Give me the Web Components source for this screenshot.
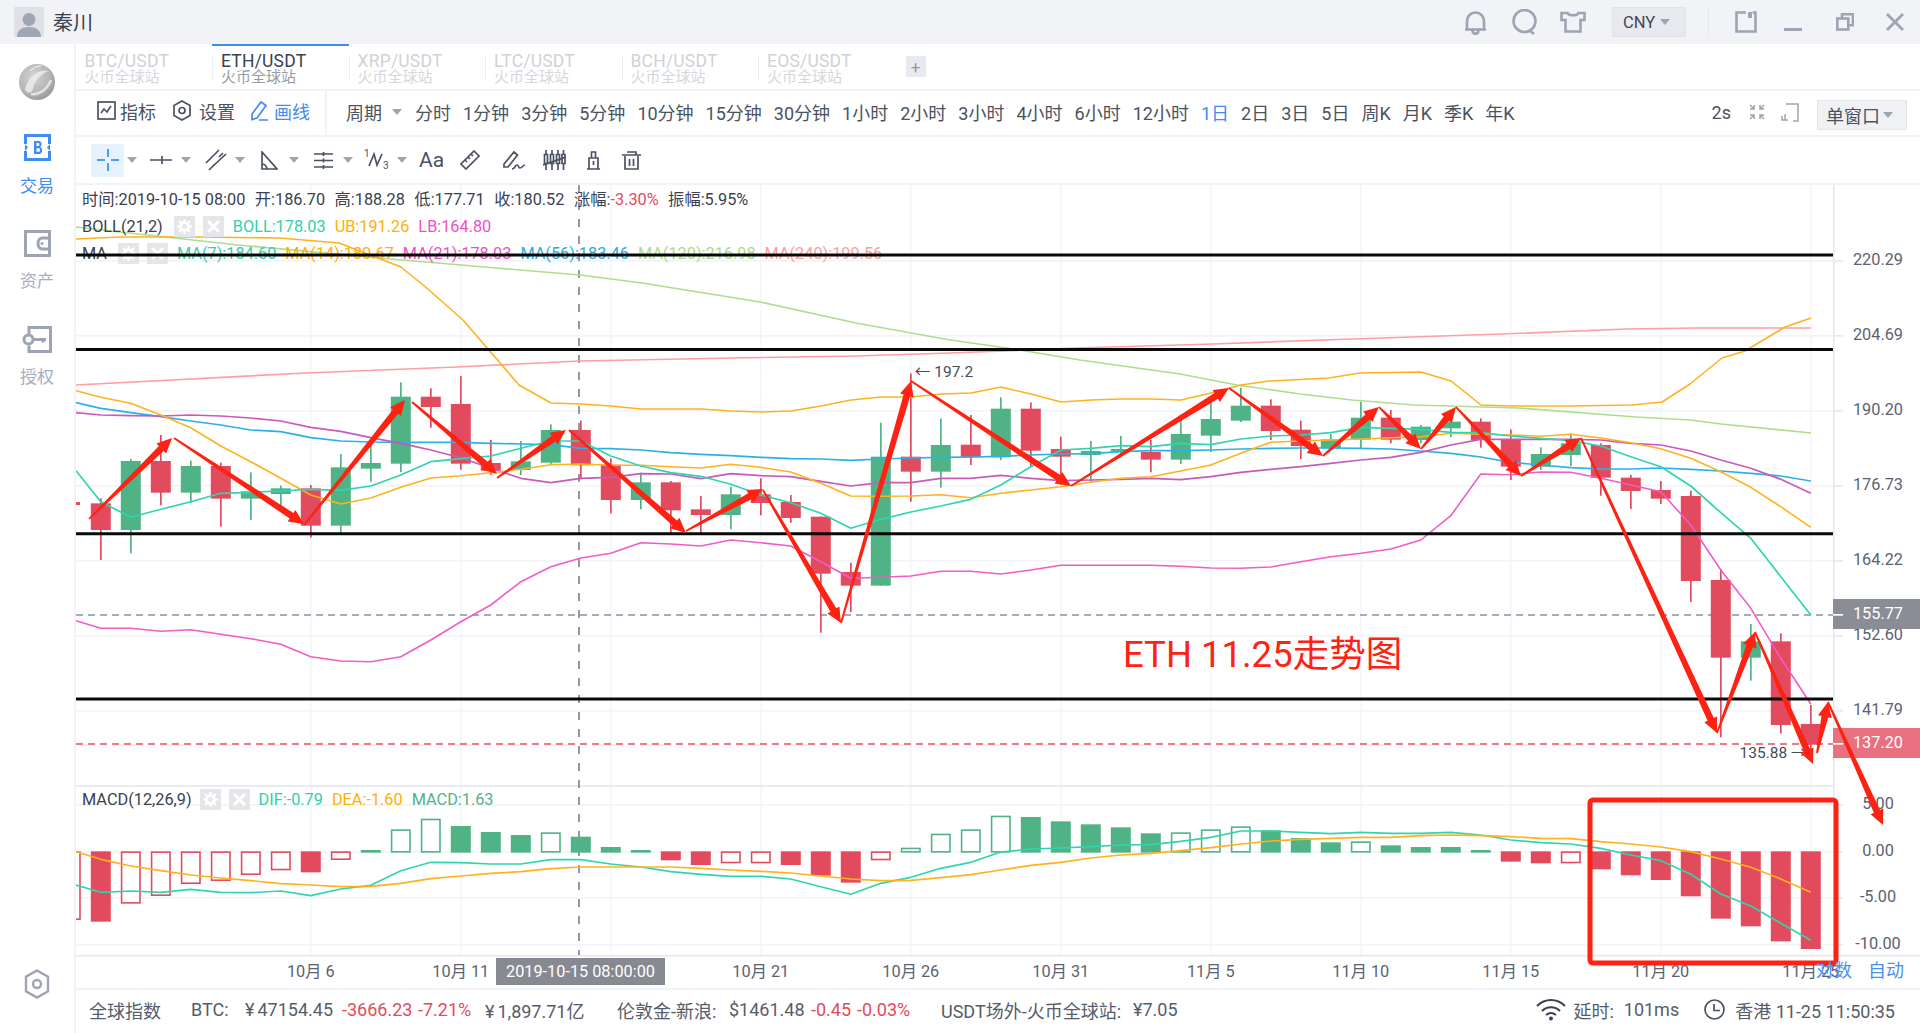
<!DOCTYPE html>
<html lang="zh">
<head>
<meta charset="utf-8">
<title>ETH/USDT</title>
<style>
html, body { margin: 0; height: 100%; background: #fff; overflow: hidden; }
body { font-family: Roboto, "Noto Sans CJK SC", sans-serif; color: #3f4654; }
</style>
</head>
<body>
<app-shell>
    <title-bar slot="top"></title-bar>
    <side-nav slot="side"></side-nav>
    <pair-tabs></pair-tabs>
    <period-bar></period-bar>
    <draw-bar></draw-bar>
    <kline-chart></kline-chart>
    <status-bar></status-bar>
</app-shell>

<script>
const html = String.raw;

const GREY = '#9ea4b1';
const INK = '#4b5261';
const BLUE = '#3f8cf2';
const RED = '#e24b5d';
const GREEN = '#4fb386';

class Base extends HTMLElement {
    constructor() {
        super();
        this.attachShadow({ mode: 'open' });
    }
}

class AppShell extends Base {
    connectedCallback() {
        this.shadowRoot.innerHTML = html`
            <style>
                :host { display: grid; grid-template: 44px 1fr / 74px 1fr; width: 1920px; height: 1033px; }
                .top { grid-column: 1 / 3; display: block; }
                .side { display: block; }
                main { display: flex; flex-direction: column; min-width: 0; border-left: 2px solid #f2f3f8; }
            </style>
            <slot class="top" name="top"></slot>
            <slot class="side" name="side"></slot>
            <main><slot></slot></main>
        `;
    }
}

class TitleBar extends Base {
    connectedCallback() {
        const s = `stroke="${GREY}" stroke-width="2.6" fill="none"`;
        this.shadowRoot.innerHTML = html`
            <style>
                :host { display: flex; align-items: center; height: 44px; background: #f1f3f7; }
                .avatar { width: 30px; height: 30px; margin-left: 14px; background: #dfe1e6; overflow: hidden; }
                .name { margin-left: 9px; padding-bottom: 2px; font-size: 20px; color: #3a4150; }
                .right { display: flex; align-items: center; margin-left: auto; }
                svg { display: block; }
                .cny { display: flex; align-items: center; gap: 5px; width: 74px; height: 30px; box-sizing: border-box; padding-left: 10px;
                       background: #e7e9ee; border: 1px solid #e1e3e8; font-size: 16.5px; color: #3f4654; }
                .caret { width: 0; height: 0; border: 5px solid transparent; border-top: 6px solid ${GREY}; border-bottom: 0; }
                .sep { width: 1px; height: 24px; background: #e3e5ea; }
            </style>
            <div class="avatar">
                <svg width="30" height="30" viewBox="0 0 30 30"><circle cx="15" cy="12.5" r="6.5" fill="#a0a6b3"/><path d="M3 30c0-7 5-10 12-10s12 3 12 10z" fill="#a0a6b3"/></svg>
            </div>
            <span class="name">秦川</span>
            <div class="right">
                <svg width="25" height="25" viewBox="0 0 25 25" ${s}><path d="M4 19V11a8.500 8.500 0 0 1 17 0v8"/><path d="M2 19.500h21"/><path d="M9.500 20c0 5 6 5 6 0"/></svg>
                <svg style="margin-left:23px" width="28" height="26" viewBox="0 0 28 26" ${s}><circle cx="13.500" cy="12" r="11"/><path d="M18 21l5 4"/></svg>
                <svg style="margin-left:21px" width="26" height="22" viewBox="0 0 26 22" ${s}><path d="M1.500 2h6c1 3 10 3 11 0h6v7h-4v11.500h-15V9h-4z"/></svg>
                <div class="cny" style="margin-left:26px">CNY<i class="caret"></i></div>
                <i class="sep" style="margin-left:22px"></i>
                <svg style="margin-left:26px" width="22" height="22" viewBox="0 0 22 22" ${s}><path d="M11 1.500H1.500v19h19V1.500h-3"/><rect x="13" y="1" width="4" height="6" fill="${GREY}" stroke="none"/></svg>
                <svg style="margin-left:27px" width="18" height="22" viewBox="0 0 18 22"><rect y="17" width="18" height="3" fill="${GREY}"/></svg>
                <svg style="margin-left:34px" width="18" height="18" viewBox="0 0 18 18" ${s}><rect x="1.300" y="5.500" width="11" height="11"/><path d="M6 5V1.300h11v11h-4"/></svg>
                <svg style="margin-left:32px;margin-right:16px" width="18" height="18" viewBox="0 0 18 18" stroke="${GREY}" stroke-width="2.8"><path d="M1 1l16 16M17 1L1 17"/></svg>
            </div>
        `;
    }
}

class SideNav extends Base {
    connectedCallback() {
        this.shadowRoot.innerHTML = html`
            <style>
                :host { display: flex; flex-direction: column; align-items: center; height: 989px; position: relative; }
                svg { display: block; }
                span { font-size: 17px; line-height: 22px; color: #a8aeba; }
                .on { color: ${BLUE}; }
                .hex { margin-top: auto; margin-bottom: 34px; }
            </style>
            <svg style="margin-top:19px" width="38" height="38" viewBox="0 0 38 38">
                <defs><radialGradient id="g" cx=".4" cy=".35" r=".75"><stop offset="0" stop-color="#d4d4d4"/><stop offset=".65" stop-color="#b2b2b2"/><stop offset="1" stop-color="#8e8e8e"/></radialGradient></defs>
                <circle cx="19" cy="19" r="18" fill="url(#g)"/>
                <path d="M7 27C9 15 20 5 31 8 24 10 16 17 15 26 14 30 10 31 7 27z" fill="#ececec" fill-opacity=".85"/>
                <path d="M13 31c8 1 16-4 20-14" stroke="#e2e2e2" stroke-width="2.500" fill="none"/>
                <path d="M12 8c4-4 8-5 11-5" stroke="#fff" stroke-width="1" fill="none"/>
            </svg>
            <svg style="margin-top:33px" width="27" height="27" viewBox="0 0 27 27">
                <path d="M1.500 10V1.500h24V10M1.500 17v8.500h24V17" stroke="${BLUE}" stroke-width="3" fill="none"/>
                <path d="M1 10l3 3.500-3 3.500M26 10l-3 3.500 3 3.500" fill="${BLUE}"/>
                <path d="M10 7h5c3 0 3.500 5.500 1 6 3 .5 3 7-1 7h-5z M12.500 9v3h2c1.200 0 1.200-3 0-3z M12.500 14.200v3.600h2.500c1.400 0 1.400-3.600 0-3.600z" fill="${BLUE}" fill-rule="evenodd"/>
            </svg>
            <span class="on" style="margin-top:14px">交易</span>
            <svg style="margin-top:33px" width="27" height="27" viewBox="0 0 27 27" fill="none" stroke="${GREY}" stroke-width="3">
                <path d="M25.500 1.500h-24v24h24z"/><path d="M25.500 8h-7c-6 0-6 11 0 11h7"/><circle cx="18" cy="13.500" r="1.500" fill="${GREY}" stroke="none"/>
            </svg>
            <span style="margin-top:13px">资产</span>
            <svg style="margin-top:34px" width="30" height="27" viewBox="0 0 30 27" fill="none" stroke="${GREY}" stroke-width="3">
                <path d="M7 8V1.500h21.500v24H7v-6"/><circle cx="6.500" cy="13.500" r="4.500"/><path d="M11 13.500h13M21 13.500v3"/>
            </svg>
            <span style="margin-top:13px">授权</span>
            <svg class="hex" width="26" height="30" viewBox="0 0 26 30" fill="none" stroke="${GREY}" stroke-width="2.400">
                <path d="M13 1.500l11 6.300v14.400l-11 6.300-11-6.300V7.800z"/><circle cx="13" cy="15" r="4"/>
            </svg>
        `;
    }
}

class PairTabs extends Base {
    connectedCallback() {
        const pairs = ['BTC', 'ETH', 'XRP', 'LTC', 'BCH', 'EOS'];
        const tabs = pairs.map(p => html`<div class="tab ${p === 'ETH' ? 'on' : ''}"><b>${p}/USDT</b><small>火币全球站</small></div>`).join('');
        this.shadowRoot.innerHTML = html`
            <style>
                :host { display: flex; align-items: flex-start; height: 45px; border-bottom: 2px solid #f2f3f8; flex: none; margin-left: -.5px; }
                .tab { width: 136.5px; height: 45px; box-sizing: border-box; padding: 9px 0 0 9px; position: relative; color: #cfd2d7; }
                .tab + .tab::before { content: ''; position: absolute; left: 0; top: 12px; height: 24px; width: 1px; background: #eceef2; }
                .on { box-shadow: inset 0 2px 0 ${BLUE}; color: #3a4150; }
                .tab.on + .tab::before, .tab.on::before { background: #eceef2; }
                b { display: block; font-weight: 400; font-size: 17.5px; letter-spacing: .2px; line-height: 17px; white-space: nowrap; }
                small { display: block; font-size: 15px; line-height: 15px; color: #d5d7db; white-space: nowrap; }
                .on small { color: #969ba5; }
                .plus { display: flex; align-items: center; justify-content: center; width: 20px; height: 21px; margin: 12px 0 0 11px; background: #e7eaee; color: #949aa6; font-size: 17px; }
            </style>
            ${tabs}<div class="plus">+</div>
        `;
    }
}

class PeriodBar extends Base {
    connectedCallback() {
        const periods = ['分时', '1分钟', '3分钟', '5分钟', '10分钟', '15分钟', '30分钟', '1小时', '2小时', '3小时', '4小时', '6小时', '12小时', '1日', '2日', '3日', '5日', '周K', '月K', '季K', '年K'];
        const s = `fill="none" stroke="${INK}" stroke-width="1.700"`;
        this.shadowRoot.innerHTML = html`
            <style>
                :host { display: flex; align-items: center; height: 44px; box-sizing: border-box; padding-bottom: 2px; border-bottom: 2px solid #f2f3f8; height: 46px; font-size: 18px; color: ${INK}; flex: none; white-space: nowrap; }
                svg { display: block; flex: none; }
                .tools { display: flex; align-items: center; height: 46px; margin-top: -2px; margin-bottom: -2px; width: 251px; box-sizing: border-box; padding: 0 0 3px 21px; border-right: 2px solid #f2f3f8; }
                .blue { color: ${BLUE}; }
                .list { display: flex; align-items: center; gap: 12px; margin-left: 19px; }
                .caret { width: 0; height: 0; border: 5px solid transparent; border-top: 6px solid ${GREY}; border-bottom: 0; margin: 0 1px 0 -2px; }
                .right { display: flex; align-items: center; margin-left: auto; }
                .btn { display: flex; align-items: center; gap: 5px; width: 90px; height: 30px; box-sizing: border-box; padding-left: 8px; margin: 6px 13px 0 18px; background: #eff1f4; border: 1px solid #e3e5e9; }
            </style>
            <div class="tools">
                <svg width="19" height="19" viewBox="0 0 19 19" ${s}><rect x="1" y="1" width="17" height="17"/><path d="M4 12l3-4 3 3 4-6"/></svg>
                <span style="margin-left:4px">指标</span>
                <svg style="margin-left:17px" width="18" height="21" viewBox="0 0 18 21" ${s}><path d="M9 1l8 4.500v10L9 20l-8-4.500v-10z"/><circle cx="9" cy="10.500" r="3"/></svg>
                <span style="margin-left:8px">设置</span>
                <svg style="margin-left:15px" width="19" height="21" viewBox="0 0 19 21" fill="none" stroke="${BLUE}" stroke-width="1.700"><path d="M2 14L11 2l5 3.500L7 18l-5 1.500zM9 20h9"/></svg>
                <span class="blue" style="margin-left:5px">画线</span>
            </div>
            <div class="list">
                <span>周期</span><i class="caret"></i>
                ${periods.map(p => html`<span class="${p === '1日' ? 'blue' : ''}">${p}</span>`).join('')}
            </div>
            <div class="right">
                <span>2s</span>
                <svg style="margin-left:17px" width="18" height="18" viewBox="0 0 18 18" fill="none" stroke="${GREY}" stroke-width="1.500"><path d="M2 2l4 4M6 2v4H2M16 2l-4 4M12 2v4h4M2 16l4-4M6 16v-4H2M16 16l-4-4M12 16v-4h4"/></svg>
                <svg style="margin-left:15px" width="18" height="19" viewBox="0 0 18 19" fill="none" stroke="${GREY}" stroke-width="1.500"><path d="M5 1h12v17h-5M1 13v4h6M4 11v6"/></svg>
                <div class="btn">单窗口<i class="caret"></i></div>
            </div>
        `;
    }
}

class DrawBar extends Base {
    connectedCallback() {
        const s = `fill="none" stroke="${INK}" stroke-width="1.700"`;
        const caret = ml => html`<i class="caret" style="margin-left:${ml}px"></i>`;
        this.shadowRoot.innerHTML = html`
            <style>
                :host { display: flex; align-items: center; height: 46px; border-bottom: 2px solid #f2f3f8; flex: none; }
                svg { display: block; flex: none; }
                .on { display: flex; align-items: center; justify-content: center; width: 33px; height: 33px; margin-left: 15px; background: #e6f3fd; }
                .caret { flex: none; width: 0; height: 0; border: 5px solid transparent; border-top: 6px solid ${GREY}; border-bottom: 0; }
                .aa { width: 26px; font-size: 21px; color: ${INK}; margin-left: 12px; line-height: 1; }
                text { font: 10px Roboto, sans-serif; fill: ${INK}; }
            </style>
            <div class="on"><svg width="22" height="22" viewBox="0 0 22 22" stroke="#4e9bf5" stroke-width="2"><path d="M11 0v8M11 14v8M0 11h8M14 11h8"/></svg></div>
            ${caret(3)}
            <svg style="margin-left:13px" width="22" height="14" viewBox="0 0 22 14" ${s}><path d="M0 7h22M12 3v8"/></svg>
            ${caret(9)}
            <svg style="margin-left:14px" width="22" height="22" viewBox="0 0 22 22" ${s}><path d="M1 14L14 1M6 19L21 5M4 21l6-6M14 8l4-4"/></svg>
            ${caret(8)}
            <svg style="margin-left:15px" width="18" height="19" viewBox="0 0 18 19" ${s}><path d="M2 1v17h15zM2 13c3 0 4.500 2 5 5"/></svg>
            ${caret(11)}
            <svg style="margin-left:15px" width="19" height="17" viewBox="0 0 19 17" ${s}><path d="M0 2h19M0 8.500h19M0 15h19M9.500 0v4M9.500 6.500v4M9.500 13v4"/></svg>
            ${caret(10)}
            <svg style="margin-left:11px" width="25" height="22" viewBox="0 0 25 22" ${s}><path d="M5 17L10 5l3 11 5-11"/><text x="0" y="8" stroke="none">1</text><text x="19" y="20" stroke="none">3</text></svg>
            ${caret(8)}
            <span class="aa">Aa</span>
            <svg style="margin-left:15px" width="20" height="20" viewBox="0 0 20 20" ${s}><path d="M14 1l5 5L6 19l-5-5zM11 4l2 2M8 7l2 2M5 10l2 2"/></svg>
            <svg style="margin-left:22px" width="24" height="20" viewBox="0 0 24 20" ${s}><path d="M2 14L12 2l3.500 3L6 17H2zM10 19c3 0 3-4 5-4s1 3 3 3 3-3 5-3"/></svg>
            <svg style="margin-left:17px" width="23" height="20" viewBox="0 0 23 20" fill="none" stroke="${INK}" stroke-width="1.700"><path d="M3 0v20M9 0v20M15 0v20M20.500 0v20"/><path d="M1.500 4.500h3v9h-3zM7.500 4.500h3v9h-3zM13.500 4.500h3v9h-3zM19 4.500h3v9h-3z" fill="#fff"/><path d="M0 15L23 7"/></svg>
            <svg style="margin-left:20px" width="15" height="19" viewBox="0 0 15 19" ${s}><path d="M3 7h9v11H3zM5.500 7V1h4v6M7.500 10v4M1 18h13"/></svg>
            <svg style="margin-left:21px" width="19" height="19" viewBox="0 0 19 19" ${s}><path d="M3 5v13h13V5M0 4h19M5 1h9v3M7.500 8v7M11.500 8v7"/></svg>
        `;
    }
}

const kx = i => 100.8 + 30 * i;
const yA = z => 360 + z / 3;
const yB = z => 400 + z / 3;
const yM = z => 780 + z / 3;

// [up, bodyTop, bodyBottom, wickTop, wickBottom]
const CANDLES_A = [
    [0, 430, 510, 415, 600], [1, 303, 510, 297, 580], [0, 303, 398, 225, 436], [1, 318, 398, 302, 428],
    [0, 318, 416, 308, 500], [1, 394, 416, 337, 480], [1, 385, 402, 377, 440], [0, 385, 497, 375, 533],
    [1, 322, 497, 282, 520], [1, 309, 326, 250, 365], [1, 110, 311, 67, 336], [0, 110, 141, 85, 203],
    [0, 132, 311, 48, 329], [0, 309, 332, 240, 345], [1, 304, 330, 243, 345], [1, 210, 308, 193, 313],
    [0, 210, 316, 182, 355], [0, 314, 420, 295, 460], [1, 367, 420, 338, 448], [0, 367, 451, 363, 520],
    [0, 448, 465, 408, 520], [1, 403, 465, 380, 508], [0, 403, 429, 355, 466], [0, 426, 474, 405, 488],
    [0, 470, 641, 470, 818], [0, 636, 677, 608, 756], [1, 290, 677, 188, 677], [0, 290, 335, 40, 425],
    [1, 255, 335, 176, 383], [0, 254, 292, 165, 315], [1, 146, 292, 112, 300], [0, 146, 272, 127, 318],
    [0, 267, 290, 230, 375], [1, 273, 285, 243, 368], [1, 267, 275, 228, 280], [0, 276, 299, 240, 337],
    [1, 222, 299, 178, 312], [1, 177, 227, 122, 276], [1, 137, 182, 83, 186], [0, 137, 213, 118, 240],
    [0, 209, 258, 182, 297], [1, 238, 265, 222, 270],
];
const CANDLES_B = [
    [1, 53, 119, 5, 145], [0, 53, 119, 30, 130], [1, 80, 120, 75, 130], [1, 65, 85, 40, 112],
    [0, 65, 120, 55, 143], [0, 118, 200, 88, 240], [1, 162, 200, 142, 210], [1, 130, 165, 100, 198],
    [0, 135, 233, 130, 287], [0, 233, 273, 225, 327], [0, 270, 296, 243, 312], [0, 288, 543, 272, 606],
    [0, 540, 773, 507, 1012], [1, 724, 773, 672, 842], [0, 724, 975, 700, 1000], [0, 972, 1034, 915, 1060],
];

// [kind, z top, z bottom] kind: r/g filled, R/G hollow
const MACD_BARS = ['R214-420',
    'r214-425', 'R214-371', 'R214-348', 'R214-312', 'R214-303', 'R214-285', 'R214-271', 'r214-277', 'R214-240', 'g210-218',
    'G148-218', 'G116-218', 'g138-218', 'g156-218', 'g165-218', 'G157-218', 'g170-218', 'g201-218', 'g210-218', 'r214-241',
    'r214-255', 'R214-250', 'R214-250', 'r214-255', 'r214-287', 'r214-308', 'R214-241', 'G203-218', 'G161-218', 'G148-218',
    'G107-218', 'g111-218', 'g124-218', 'g133-218', 'g142-218', 'g160-218', 'G157-218', 'G148-218', 'G139-218', 'g151-218',
    'g174-218', 'g187-218', 'G184-218', 'g196-218', 'g201-218', 'g201-218', 'g210-218', 'r214-245', 'r214-250', 'R214-250',
    'r214-268', 'r214-286', 'r214-300', 'r214-349', 'r214-416', 'r214-439', 'r214-484', 'r214-507',
];

const series = (head, a, b) => [[76, yA(head)], ...a.map((z, i) => [kx(i), yA(z)]), ...b.map((z, i) => [kx(i + 42), yB(z)])];

const LINES = [
    { c: '#ff9fa3', w: 1.7, p: [[76, 385], [306, 373], [457, 367], [580, 361], [732, 358], [856, 356], [950, 353], [1076, 348], [1214, 344], [1352, 339], [1501, 334], [1627, 329], [1696, 328], [1811, 328]] },
    { c: '#aede8c', w: 1.7, p: [[76, 227], [120, 232], [238, 245], [379, 258], [496, 268], [580, 275], [642, 283], [698, 292], [760, 302], [856, 323], [950, 340], [1007, 348], [1080, 360], [1180, 374], [1237, 385], [1300, 394], [1352, 400], [1414, 405], [1518, 408], [1636, 417], [1691, 420], [1721, 424], [1811, 433]] },
    { c: '#ffb21e', w: 1.6, p: [[76, 239], [120, 237], [200, 237], [280, 238], [339, 243], [401, 267], [429, 290], [463, 320], [519, 385], [551, 403], [581, 404], [611, 406], [641, 409], [671, 409], [701, 409], [731, 411], [761, 412], [791, 411], [821, 406], [851, 400], [881, 397], [911, 397], [941, 394], [971, 393], [1001, 387], [1031, 394], [1061, 402], [1091, 400], [1121, 399], [1151, 399], [1181, 400], [1211, 393], [1241, 385], [1269, 381], [1329, 378], [1360, 373], [1421, 372], [1451, 381], [1481, 405], [1511, 406], [1569, 406], [1632, 405], [1662, 402], [1690, 384], [1722, 358], [1745, 351], [1785, 327], [1811, 318]] },
    { c: '#2cb0e8', w: 1.7, p: series(128,
        [145, 158, 170, 183, 195, 210, 215, 233, 243, 246, 247, 247, 247, 250, 252, 254, 265, 266, 270, 278, 283, 287, 292, 296, 297, 301, 297, 294, 292, 291, 289, 285, 282, 281, 275, 272, 272, 270, 267, 265, 264, 264],
        [145, 147, 153, 160, 171, 187, 195, 203, 207, 207, 204, 208, 213, 220, 228, 243]) },
    { c: '#c95ab9', w: 1.7, p: series(158,
        [165, 167, 168, 165, 168, 174, 183, 202, 214, 233, 250, 270, 293, 325, 355, 368, 355, 352, 341, 342, 356, 341, 347, 350, 364, 378, 368, 368, 355, 355, 346, 355, 362, 360, 358, 355, 359, 350, 337, 328, 320, 310],
        [180, 172, 157, 135, 118, 118, 118, 118, 120, 130, 135, 153, 180, 205, 238, 280]) },
    { c: '#ffb21e', w: 1.6, p: series(92,
        [112, 130, 165, 203, 258, 305, 355, 405, 432, 414, 382, 354, 347, 338, 328, 314, 312, 316, 316, 320, 324, 313, 322, 336, 370, 408, 409, 408, 404, 413, 400, 390, 380, 367, 355, 350, 333, 315, 280, 247, 243, 240],
        [117, 113, 110, 100, 103, 105, 109, 103, 114, 128, 146, 175, 215, 262, 320, 382]) },
    { c: '#f05cc8', w: 1.6, p: series(782,
        [805, 805, 814, 809, 823, 836, 853, 890, 903, 905, 890, 840, 785, 735, 665, 620, 594, 580, 548, 552, 558, 540, 548, 558, 605, 655, 652, 648, 634, 634, 642, 630, 616, 616, 616, 616, 619, 624, 625, 621, 605, 590],
        [460, 447, 420, 347, 222, 224, 216, 217, 235, 255, 275, 375, 510, 625, 775, 912]) },
    { c: '#30d5b0', w: 1.7, p: series(332,
        [425, 472, 448, 425, 400, 397, 393, 388, 391, 378, 345, 305, 296, 288, 265, 243, 243, 288, 318, 338, 349, 373, 405, 428, 460, 505, 478, 456, 438, 418, 375, 320, 270, 265, 257, 260, 250, 254, 237, 228, 225, 218],
        [82, 85, 88, 97, 98, 108, 115, 122, 138, 170, 200, 258, 338, 415, 530, 645]) },
];

const DIF = [315, 337, 333, 337, 328, 337, 338, 333, 347, 327, 316, 272, 247, 248, 252, 252, 239, 239, 252, 261, 275, 283, 289, 289, 297, 320, 343, 310, 292, 265, 247, 216, 207, 204, 200, 195, 194, 184, 172, 153, 153, 157, 161, 157, 160, 160, 157, 165, 180, 188, 192, 205, 225, 242, 283, 342, 378, 430, 481];
const DEA = [215, 238, 258, 272, 285, 294, 302, 311, 315, 320, 319, 310, 296, 288, 280, 275, 266, 261, 261, 261, 261, 265, 270, 274, 279, 288, 297, 302, 301, 293, 284, 270, 256, 247, 234, 225, 220, 212, 203, 192, 183, 178, 175, 172, 172, 167, 165, 167, 170, 175, 176, 185, 192, 201, 215, 237, 262, 297, 337];

const ARROWS = [
    [89, 519, 172, 438], [174, 438, 304, 524], [304, 525, 405, 400], [412, 402, 497, 474], [497, 478, 566, 430],
    [569, 430, 686, 533], [686, 531, 763, 489], [763, 490, 841, 623], [841, 623, 911, 381], [911, 381, 1071, 486],
    [1071, 486, 1229, 388], [1229, 388, 1323, 456], [1323, 456, 1379, 407], [1379, 407, 1421, 449], [1421, 449, 1456, 407],
    [1456, 407, 1521, 476], [1521, 476, 1581, 438], [1581, 438, 1717, 733], [1717, 733, 1755, 632], [1755, 632, 1813, 764],
    [1817, 753, 1828, 702], [1828, 702, 1883, 825],
];

const path = (pts, c, w) => `<polyline points="${pts.map(p => p.map(n => n.toFixed(1)).join(',')).join(' ')}" fill="none" stroke="${c}" stroke-width="${w}" stroke-linejoin="round"/>`;

function arrow([ax, ay, bx, by]) {
    const len = Math.hypot(bx - ax, by - ay);
    const dx = (bx - ax) / len, dy = (by - ay) / len;
    const nx = -dy, ny = dx;
    const h = 15, s = 3.4, w = 7;
    const cx = bx - dx * h, cy = by - dy * h;
    const p = [
        [ax + nx * .9, ay + ny * .9], [cx + nx * s, cy + ny * s], [cx + nx * w, cy + ny * w], [bx, by],
        [cx - nx * w, cy - ny * w], [cx - nx * s, cy - ny * s], [ax - nx * .9, ay - ny * .9],
    ];
    return `<polygon points="${p.map(q => q.map(n => n.toFixed(1)).join(',')).join(' ')}" fill="#ff2112"/>`;
}

function candle([up, top, bottom, wt, wb], i, ys) {
    const c = up ? GREEN : RED;
    const x = kx(i);
    return `<rect x="${x - .8}" y="${ys(wt)}" width="1.7" height="${ys(wb) - ys(wt)}" fill="${c}"/>`
        + `<rect x="${x - 10}" y="${ys(top)}" width="20" height="${ys(bottom) - ys(top)}" fill="${c}"/>`;
}

function macdBar(b, idx) {
    const i = idx - 1;
    const kind = b[0];
    const [t, e] = b.slice(1).split('-').map(yM);
    const x = kx(i);
    if (kind === 'r' || kind === 'g') {
        return `<rect x="${x - 10}" y="${t}" width="20" height="${e - t}" fill="${kind === 'r' ? RED : GREEN}"/>`;
    }
    return `<rect x="${x - 9.2}" y="${t + .8}" width="18.400" height="${e - t - 1.600}" fill="#fff" stroke="${kind === 'R' ? RED : GREEN}" stroke-width="1.600"/>`;
}

class IndicatorRow extends Base {
    // one legend row: name, two small buttons, coloured values
    connectedCallback() {
        const vals = JSON.parse(this.getAttribute('values'));
        const gear = html`<svg width="21" height="21" viewBox="0 0 21 21"><rect width="21" height="21" fill="#e4e6ea"/><circle cx="10.500" cy="10.500" r="4" fill="none" stroke="#fff" stroke-width="3"/><path d="M10.500 3v3M10.500 15v3M3 10.500h3M15 10.500h3M5 5l2 2M14 14l2 2M16 5l-2 2M7 14l-2 2" stroke="#fff" stroke-width="2"/></svg>`;
        const cross = html`<svg width="21" height="21" viewBox="0 0 21 21"><rect width="21" height="21" fill="#e4e6ea"/><path d="M5 5l11 11M16 5L5 16" stroke="#fff" stroke-width="3"/></svg>`;
        this.shadowRoot.innerHTML = html`
            <style>
                :host { display: flex; align-items: center; gap: 8px; height: 27px; font-size: 16.300px; color: #3a4150; white-space: nowrap; }
                svg { display: block; flex: none; }
                .n { margin-right: var(--name-gap, 3px); }
                .v { margin-left: 1px; }
            </style>
            <span class="n">${this.getAttribute('name')}</span>${gear}${cross}
            ${vals.map(([t, c]) => html`<span class="v" style="color:${c}">${t}</span>`).join('')}
        `;
    }
}

class KlineChart extends Base {
    connectedCallback() {
        const top = 185, left = 76, w = 1844, h = 803;
        const vb = `viewBox="${left} ${top} ${w} ${h}" width="${w}" height="${h}"`;
        const dates = [[7, '10月 6'], [12, '10月 11'], [17, '10月 16'], [22, '10月 21'], [27, '10月 26'], [32, '10月 31'], [37, '11月 5'], [42, '11月 10'], [47, '11月 15'], [52, '11月 20'], [57, '11月 25']];
        const prices = [[261, '220.29'], [336, '204.69'], [411, '190.20'], [486, '176.73'], [561, '164.22'], [636, '152.60'], [711, '141.79']];
        const macdTicks = [[805, '5.00'], [852, '0.00'], [898, '-5.00'], [945, '-10.00']];
        const GRID = '#f1f4f8';

        let g = '';
        dates.forEach(([i]) => { g += `<rect x="${kx(i) - .5}" y="185" width="1.300" height="770" fill="${GRID}"/>`; });
        [...prices, ...macdTicks].forEach(([y]) => {
            g += `<rect x="76" y="${y - 1}" width="1757" height="1.700" fill="${GRID}"/><rect x="1833" y="${y - 1}" width="10" height="1.700" fill="#e8eaee"/>`;
        });
        g += `<rect x="76" y="785" width="1757" height="2" fill="#e9edf2"/><rect x="76" y="955" width="1844" height="1.500" fill="#e6e8ed"/><rect x="1833" y="185" width="1.500" height="771" fill="#e6e8ed"/>`;

        let k = `<rect x="76" y="${yA(426)}" width="4" height="3" fill="${RED}"/>`;
        CANDLES_A.forEach((c, i) => { k += candle(c, i, yA); });
        CANDLES_B.forEach((c, i) => { k += candle(c, i + 42, yB); });
        let m = MACD_BARS.map(macdBar).join('');
        const lineSvg = LINES.map(l => path(l.p, l.c, l.w)).join('');
        const macdPts = a => a.map((z, i) => [i === 0 ? 76 : kx(i - 1), yM(z)]);
        const macdLines = path(macdPts(DIF), '#30d5b0', 1.7) + path(macdPts(DEA), '#ffb21e', 1.7);

        const axis = prices.map(([y, t]) => `<text x="1878" y="${y - 2}">${t}</text>`).join('')
            + macdTicks.map(([y, t]) => `<text x="1878" y="${y - 2}">${t}</text>`).join('');
        const xLabels = dates.map(([i, t]) => `<text x="${kx(i)}" y="971">${t}</text>`).join('');

        this.shadowRoot.innerHTML = html`
            <style>
                :host { display: block; position: relative; width: ${w}px; height: ${h}px; border-bottom: 2px solid #f2f3f8; flex: none; overflow: hidden; }
                svg { position: absolute; left: 0; top: 0; display: block; }
                text { font: 16.300px Roboto, "Noto Sans CJK SC", sans-serif; fill: #5b6270; text-anchor: middle; dominant-baseline: central; }
                .w text { fill: #fff; }
                .a text { fill: #454c5a; font-size: 15.500px; }
                .big { position: absolute; left: 1047px; top: 449px; font-size: 36.500px; line-height: 42px; color: #ff2112; white-space: nowrap; }
                .legend { position: absolute; left: 6px; top: 0; display: flex; flex-direction: column; }
                .ohlc { display: flex; gap: 9.500px; height: 27px; align-items: center; margin-top: -1px; margin-bottom: 2px; font-size: 16.300px; color: #3a4150; white-space: nowrap; }
                .red { color: ${RED}; }
                .macd { position: absolute; left: 6px; top: 601px; --name-gap: 0px; }
                .btns { position: absolute; right: 16px; top: 774px; display: flex; gap: 16px; font-size: 18px; line-height: 24px; color: #4a90f0; }
            </style>
            <svg ${vb}>
                ${g}
                <g stroke-dasharray="7 5" stroke-width="1.500" fill="none">
                    <path d="M76 615H1833" stroke="#8492a0"/>
                    <path d="M76 744H1833" stroke="#e34c5e"/>
                    <path d="M579 185V955" stroke="#6f7a88" stroke-dasharray="8 9"/>
                </g>
                ${k}${lineSvg}${m}${macdLines}
                <g>${axis}</g>
                <rect x="1833" y="599" width="87" height="30" fill="#8a8d96"/>
                <rect x="1833" y="728" width="87" height="30" fill="#e8707f"/>
                <rect x="1833" y="614" width="10" height="1.700" fill="#fff"/>
                <rect x="1833" y="743" width="10" height="1.700" fill="#fff"/>
                <g class="w"><text x="1878" y="613">155.77</text><text x="1878" y="742">137.20</text></g>
                ${xLabels}
                <rect x="496" y="958" width="169" height="27" fill="#82858c" fill-opacity=".96"/>
                <g class="w"><text x="580.500" y="971">2019-10-15 08:00:00</text></g>
                <g class="a">
                    <text x="944" y="372">← 197.2</text>
                    <text x="1773" y="753">135.88 →</text>
                </g>
            </svg>
            <div class="legend">
                <div class="ohlc">
                    <span>时间:2019-10-15 08:00</span><span>开:186.70</span><span>高:188.28</span><span>低:177.71</span><span>收:180.52</span>
                    <span>涨幅:<span class="red">-3.30%</span></span><span>振幅:5.95%</span>
                </div>
                <indicator-row name="BOLL(21,2)" values='[["BOLL:178.03","#2fd1ae"],["UB:191.26","#ffb000"],["LB:164.80","#f14fc5"]]'></indicator-row>
                <indicator-row name="MA" values='[["MA(7):184.60","#2fd1ae"],["MA(14):180.67","#ffb000"],["MA(21):178.03","#f14fc5"],["MA(56):183.46","#26ade4"],["MA(120):216.98","#a9dc8a"],["MA(240):199.56","#ff9c9c"]]'></indicator-row>
            </div>
            <indicator-row class="macd" name="MACD(12,26,9)" values='[["DIF:-0.79","#2fd1ae"],["DEA:-1.60","#ffb000"],["MACD:1.63","${GREEN}"]]'></indicator-row>
            <div class="big">ETH 11.25走势图</div>
            <svg ${vb} style="pointer-events:none">
                <path d="M76 255H1833M76 349.500H1833M76 533.700H1833M76 699H1833" stroke="#000" stroke-width="3" opacity=".96"/>
                ${ARROWS.map(arrow).join('')}
                <rect x="1590" y="800" width="246" height="163" rx="3" fill="none" stroke="#ff2112" stroke-width="5"/>
            </svg>
            <div class="btns"><span>对数</span><span>自动</span></div>
        `;
    }
}

class StatusBar extends Base {
    connectedCallback() {
        const cols = [
            [102, '全球指数'], [54, 'BTC:'], [97, '<i>¥</i>47154.45'], [76, '-3666.23', 1], [67, '-7.21%', 1],
            [132, '<i>¥</i>1,897.71亿'], [112, '伦敦金-新浪:'], [82, '$1461.48'], [46, '-0.45', 1], [84, '-0.03%', 1],
            [192, 'USDT场外-火币全球站:'], [50, '¥7.05'],
        ];
        this.shadowRoot.innerHTML = html`
            <style>
                :host { display: flex; align-items: center; height: 43px; box-sizing: border-box; padding: 0 0 4px 13px; font-size: 18px; color: #555d6b; white-space: nowrap; flex: none; }
                svg { display: block; flex: none; }
                .c { flex: none; }
                i { font-style: normal; margin-right: 3px; }
                .red { color: ${RED}; }
                .right { display: flex; align-items: center; margin-left: auto; margin-right: 25px; }
            </style>
            ${cols.map(([w, t, red]) => html`<span class="c ${red ? 'red' : ''}" style="width:${w}px">${t}</span>`).join('')}
            <div class="right">
                <svg width="30" height="22" viewBox="0 0 30 22" fill="none" stroke="#3a4150" stroke-width="2"><path d="M1 7c8-8 20-8 28 0M6 12c5-5 13-5 18 0M10 16c3-2.500 7-2.500 10 0"/><circle cx="15" cy="19.500" r="2" fill="#3a4150" stroke="none"/></svg>
                <span style="margin-left:7px">延时:</span>
                <span style="margin-left:10px">101ms</span>
                <svg style="margin-left:25px" width="21" height="21" viewBox="0 0 21 21" fill="none" stroke="#4b5261" stroke-width="1.700"><circle cx="10.500" cy="10.500" r="9.500"/><path d="M10 5v6.500h6"/></svg>
                <span style="margin-left:10px">香港 11-25 11:50:35</span>
            </div>
        `;
    }
}

customElements.define('indicator-row', IndicatorRow);
customElements.define('title-bar', TitleBar);
customElements.define('side-nav', SideNav);
customElements.define('pair-tabs', PairTabs);
customElements.define('period-bar', PeriodBar);
customElements.define('draw-bar', DrawBar);
customElements.define('kline-chart', KlineChart);
customElements.define('status-bar', StatusBar);
customElements.define('app-shell', AppShell);
</script>
</body>
</html>
